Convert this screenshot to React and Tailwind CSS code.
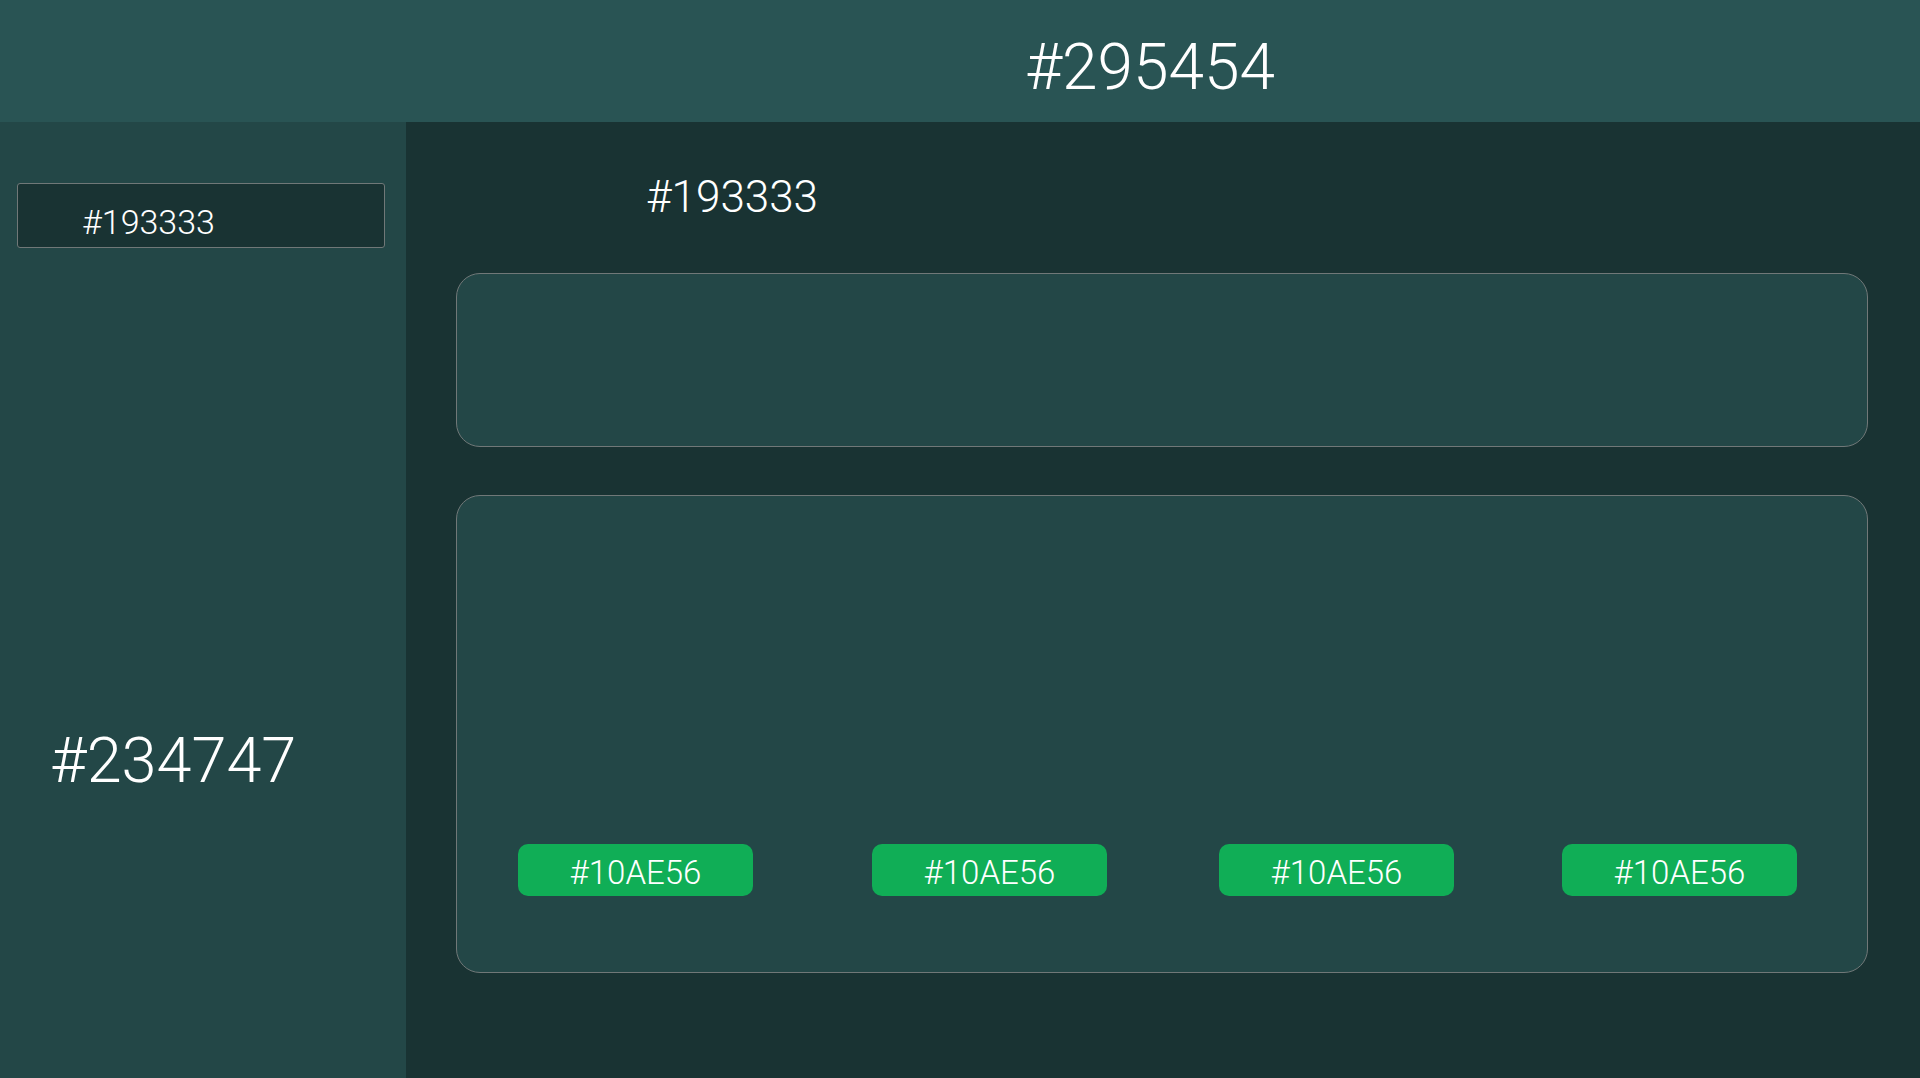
export default function App() {
  const font = { fontFamily: 'Roboto, "Noto Sans", "Liberation Sans", sans-serif' };
  return (
    <div className="w-[1920px] h-[1078px] flex flex-col overflow-hidden text-white font-light" style={font}>
      <header className="h-[122px] shrink-0 bg-[#295454] flex justify-center pl-[380px] pt-[36px]">
        <span className="text-[64px] leading-none">#295454</span>
      </header>
      <div className="flex flex-1 min-h-0">
        <aside className="w-[406px] shrink-0 bg-[#234747] flex flex-col pt-[61px] pl-[17px] pr-[21px]">
          <div className="h-[65px] rounded-[3px] border border-[#707878] bg-[#193333] pl-[64px] pt-[21px]">
            <span className="text-[34px] leading-none">#193333</span>
          </div>
          <div className="mt-[481px] pl-[33px]">
            <span className="text-[63px] leading-none">#234747</span>
          </div>
        </aside>
        <main className="flex-1 bg-[#193333] flex flex-col pl-[50px] pr-[52px] pt-[53px]">
          <div className="pl-[190px]">
            <span className="text-[44px] leading-none">#193333</span>
          </div>
          <div className="mt-[54px] h-[174px] rounded-[24px] border border-[#707878] bg-[#234747]" />
          <div className="mt-[48px] h-[478px] rounded-[24px] border border-[#707878] bg-[#234747] flex flex-col justify-end pb-[76px]">
            <div className="flex items-center pl-[61px]">
              {[0, 119, 112, 108].map((m, i) => (
                <button
                  key={i}
                  className="w-[235px] h-[52px] rounded-[10px] bg-[#10AE56] text-[33px] leading-none font-light flex items-center justify-center pt-[4px]"
                  style={{ marginLeft: m }}
                >
                  #10AE56
                </button>
              ))}
            </div>
          </div>
        </main>
      </div>
    </div>
  );
}
